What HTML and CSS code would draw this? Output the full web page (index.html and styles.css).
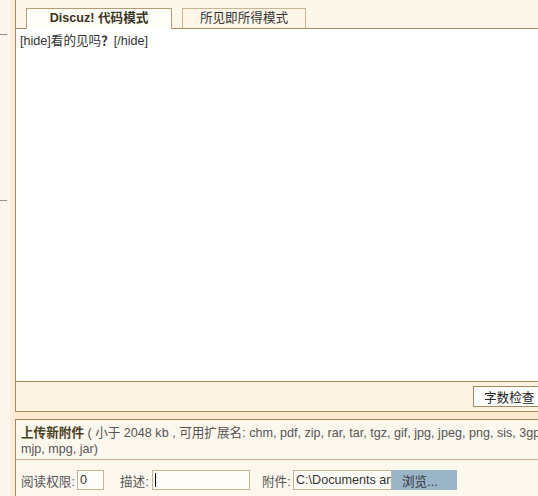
FILE: index.html
```html
<!DOCTYPE html>
<html lang="zh-CN">

<head>
    <meta charset="UTF-8">
    <title>发表帖子</title>
    <link rel="stylesheet" href="styles.css">
</head>

<body>

    <div class="page">

        <div class="side">
            <div class="dash dash-top"></div>
            <div class="dash dash-mid"></div>
        </div>

        <div class="main">

            <div class="editor">
                <div class="tabs">
                    <div class="tab tab-active">Discuz! 代码模式</div>
                    <div class="tab tab-wysiwyg">所见即所得模式</div>
                </div>
                <div class="textarea">[hide]看的见吗<b>？</b>[/hide]</div>
                <div class="toolbar">
                    <button class="btn-check">字数检查</button>
                </div>
            </div>

            <div class="spacer"></div>

            <div class="upload">
                <div class="upload-info">
                    <b>上传新附件</b> ( 小于 2048 kb , 可用扩展名: chm, pdf, zip, rar, tar, tgz, gif, jpg, jpeg, png, sis, 3gp, mp3,<br>
                    mjp, mpg, jar)
                </div>
                <div class="upload-row">
                    <label class="lbl-perm">阅读权限:</label>
                    <div class="field field-perm">0</div>
                    <label class="lbl-desc">描述:</label>
                    <div class="field field-desc"><span class="caret"></span></div>
                    <label class="lbl-file">附件:</label>
                    <div class="field field-file">C:\Documents an</div>
                    <button class="btn-browse">浏览...</button>
                </div>
            </div>

        </div>

    </div>

</body>

</html>
```

FILE: styles.css
```css
html,
body {
    margin: 0;
    padding: 0;
    background-color: #fdf6ea;
    overflow: hidden;
}

body {
    width: 538px;
    height: 496px;
    font-family: "Liberation Sans", "Noto Sans CJK SC", sans-serif;
    font-size: 12.6px;
    color: #333;
}

* {
    box-sizing: border-box;
}

.page {
    display: flex;
    width: 548px;
    height: 496px;
}

.side {
    width: 15px;
    flex-shrink: 0;
    background: linear-gradient(to right, #fdf6ec 10px, #faefdc 10px);
}

.dash {
    width: 7px;
    height: 1px;
    background-color: #8f8f8f;
}

.dash-top {
    margin-top: 34px;
}

.dash-mid {
    margin-top: 165px;
}

.main {
    flex: 1;
    display: flex;
    flex-direction: column;
    min-width: 0;
}

.editor {
    border-left: 1px solid #a48a5c;
    border-bottom: 1px solid #a48a5c;
}

.tabs {
    display: flex;
    gap: 10px;
    padding: 8px 0 0 10px;
    background-color: #fdf6ea;
    border-bottom: 1px solid #a48a5c;
    height: 29px;
}

.tab {
    height: 20px;
    line-height: 19px;
    text-align: center;
    border: 1px solid #c9b792;
    border-bottom: none;
}

.tab-active {
    width: 146px;
    height: 21px;
    background-color: #fffdf8;
    font-weight: bold;
    color: #3b3420;
    border-color: #b49d72;
}

.tab-wysiwyg {
    width: 124px;
    background-color: #fcf5e8;
    color: #333;
}

.textarea {
    height: 352px;
    padding: 5px 4px 0;
    background-color: #fff;
    line-height: 14px;
    color: #333;
}

.toolbar {
    display: flex;
    justify-content: flex-end;
    height: 30px;
    border-top: 1px solid #a48a5c;
    background-color: #fcf3e3;
}

.btn-check {
    margin: 4px 0 0 0;
    width: 75px;
    height: 21px;
    padding: 0 0 0 10px;
    text-align: left;
    font-family: inherit;
    font-size: 12.6px;
    color: #222;
    background-color: #fff;
    border: 1px solid #a48a5c;
    border-radius: 0;
}

.spacer {
    height: 7px;
    background-color: #fbead0;
}

.upload {
    flex: 1;
    border-top: 1px solid #a48a5c;
    border-left: 1px solid #a48a5c;
    background-color: #fdf8ee;
}

.upload-info {
    padding: 5px 5px 2px;
    line-height: 16px;
    white-space: nowrap;
    border-bottom: 1px solid #c8b28a;
    color: #555;
}

.upload-info b {
    color: #4a3f22;
}

.upload-row {
    display: flex;
    align-items: center;
    padding: 10px 0 0 5px;
    color: #555;
    white-space: nowrap;
}

.upload-row label {
    flex-shrink: 0;
}

.field {
    flex-shrink: 0;
    height: 20px;
    line-height: 18px;
    padding: 0 2px;
    background-color: #fffdf9;
    border: 1px solid #c5b494;
    overflow: hidden;
    white-space: nowrap;
    color: #333;
}

.lbl-perm {
    width: 56px;
}

.field-perm {
    width: 27px;
}

.lbl-desc {
    width: 32px;
    margin-left: 16px;
}

.field-desc {
    width: 98px;
}

.caret {
    display: inline-block;
    width: 1px;
    height: 14px;
    margin-top: 2px;
    background-color: #000;
}

.lbl-file {
    width: 31px;
    margin-left: 12px;
}

.field-file {
    width: 99px;
}

.btn-browse {
    flex-shrink: 0;
    width: 65px;
    height: 20px;
    padding: 0 0 0 10px;
    text-align: left;
    font-family: inherit;
    font-size: 12.6px;
    color: #333;
    background-color: #9ab5c8;
    border: none;
}
```
